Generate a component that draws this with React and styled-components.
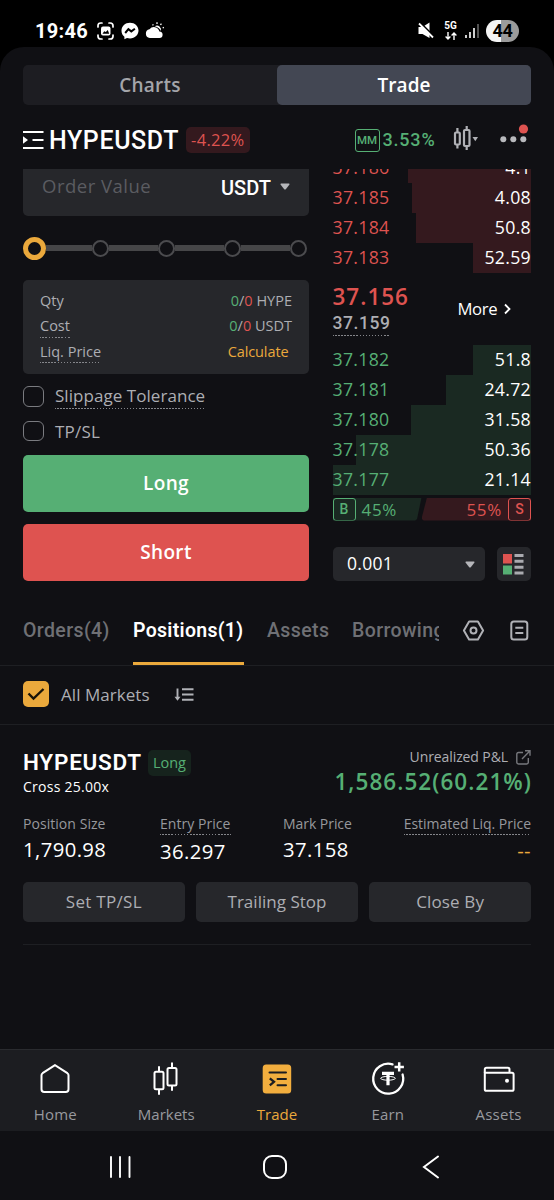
import React from "react"
import styled, { createGlobalStyle, css } from "styled-components"

const green = "#56af74"
const red = "#de5350"
const orange = "#eba93c"
const grey = "#adaeb3"
const panel = "#26272b"
const roboto = "Roboto, 'Liberation Sans', sans-serif"

const type = (size, weight, spacing) => css`
  font-size: ${size}px;
  font-weight: ${weight};
  letter-spacing: ${spacing}px;
`

const GlobalStyle = createGlobalStyle`
  * { box-sizing: border-box; }
  body {
    margin: 0;
    background: #000;
    color: #fff;
    font-family: "Open Sans", "Noto Sans", sans-serif;
    line-height: 1;
    white-space: nowrap;
  }
  button {
    border: 0;
    padding: 0;
    font-family: inherit;
    color: inherit;
  }
  svg { display: block; flex: none; overflow: visible; }
`

const Phone = styled.div`
  width: 554px;
  height: 1200px;
  overflow: hidden;
  display: flex;
  flex-direction: column;
`

/* ---------- status bar ---------- */

const StatusBar = styled.div`
  height: 47px;
  padding: 14px 35px 0 35px;
  display: flex;
  justify-content: space-between;
  font-family: ${roboto};
`

const StatusGroup = styled.div`
  height: 33px;
  display: flex;
  align-items: center;
`

const Clock = styled.span`
  ${type(20, 700, 0.3)}
  width: 61px;
`

const Network = styled.span`
  width: 15px;
  margin: 0 7px 0 9px;
  display: flex;
  flex-direction: column;
  align-items: center;
  gap: 1px;
  ${type(10, 700, 0)}
`

const Battery = styled.span`
  width: 33px;
  height: 22px;
  margin-left: 7px;
  border-radius: 11px;
  display: flex;
  align-items: center;
  justify-content: center;
  background: linear-gradient(90deg, #f4f4f4 44%, #9b9b9b 44%);
  color: #000;
  ${type(18, 700, -0.3)}
`

/* ---------- top of the app ---------- */

const Screen = styled.main`
  flex: 1;
  background: #101014;
  border-radius: 24px 24px 0 0;
  display: flex;
  flex-direction: column;
`

const Switcher = styled.div`
  height: 40px;
  margin: 18px 23px 0;
  display: grid;
  grid-template-columns: 1fr 1fr;
  border-radius: 5px;
  background: #1d1d22;
`

const SwitchTab = styled.button`
  border-radius: 5px;
  background: ${(p) => (p.$active ? "#434753" : "transparent")};
  color: ${(p) => (p.$active ? "#fff" : "#a4a5aa")};
  ${(p) => (p.$active ? type(19, 600, 0.1) : type(19, 600, 0.2))}
`

const PairBar = styled.header`
  height: 63.5px;
  padding: 7px 23px 0;
  display: flex;
  align-items: center;
`

const PairName = styled.h1`
  margin: 0 6px 0 5px;
  width: 130.5px;
  font-family: ${roboto};
  ${type(25, 500, 0.6)}
`

const Change = styled.span`
  width: 64.5px;
  height: 26px;
  line-height: 25px;
  text-align: center;
  border-radius: 5px;
  background: #34191e;
  color: ${red};
  ${type(16.5, 400, 0.3)}
`

const Margin = styled.span`
  margin-left: auto;
  display: flex;
  align-items: center;
  color: ${green};
  font-family: ${roboto};
  ${type(18, 500, 0.8)}
`

const Tag = styled.span`
  width: ${(p) => p.$width || 23}px;
  height: 23px;
  display: flex;
  align-items: center;
  justify-content: center;
  flex: none;
  border: 1.5px solid currentColor;
  border-radius: 3px;
  font-family: ${roboto};
  ${(p) => type(p.$size || 14, 500, 0)}
`

const MarginValue = styled.span`
  margin-left: 3px;
  width: 70.5px;
`

/* ---------- trading area ---------- */

const Workspace = styled.section`
  height: 413px;
  padding: 0 23px;
  display: grid;
  grid-template-columns: 286px 198.5px;
  justify-content: space-between;
  overflow: hidden;
`

const OrderForm = styled.div`
  display: flex;
  flex-direction: column;
`

const ValueField = styled.div`
  height: 47.5px;
  padding: 0 19px 12px 19px;
  display: flex;
  align-items: center;
  border-radius: 0 0 5px 5px;
  background: ${panel};
`

const Placeholder = styled.span`
  flex: 1;
  color: #5b5c61;
  ${type(18.5, 400, 0.5)}
`

const Unit = styled.span`
  margin-right: 9px;
  padding-top: 3px;
  font-family: ${roboto};
  ${type(20, 500, 0)}
`

const Slider = styled.div`
  height: 23px;
  margin: 20.5px 2.5px 20.5px 0;
  display: flex;
  align-items: center;
`

const Knob = styled.i`
  width: 23px;
  height: 23px;
  border: 5px solid ${orange};
  border-radius: 50%;
`

const Track = styled.i`
  flex: ${(p) => (p.$first ? "0 0 45.5px" : 1)};
  height: 5.5px;
  background: #464648;
`

const Stop = styled.i`
  width: 17px;
  height: 17px;
  border: 2.5px solid #4b4b4e;
  border-radius: 50%;
`

const Summary = styled.div`
  height: 93.5px;
  padding: 8px 17px 9px;
  display: grid;
  grid-template-rows: repeat(3, 1fr);
  border-radius: 5px;
  background: ${panel};
  color: ${grey};
  ${type(14.5, 400, 0)}
`

const SummaryRow = styled.div`
  display: flex;
  justify-content: space-between;
  align-items: center;
`

const Underlined = styled.span`
  padding-bottom: ${(p) => p.$gap || 3}px;
  margin-bottom: -${(p) => (p.$gap || 3) + 1}px;
  border-bottom: 1px solid transparent;
  border-image: repeating-linear-gradient(90deg, #85868b 0 1.5px, transparent 1.5px 3px) 1;
`

const Tone = styled.span`
  color: ${(p) => p.$color};
`

const Calculate = styled.span`
  margin-right: 3.5px;
  color: ${orange};
  letter-spacing: -0.1px;
`

const Option = styled.label`
  height: 21px;
  margin-top: ${(p) => p.$top}px;
  display: flex;
  align-items: center;
  color: ${grey};
  ${(p) => type(17, 400, p.$spacing)}
`

const OptionName = styled(Underlined)`
  position: relative;
  top: -1px;
`

const Box = styled.i`
  width: 20.5px;
  height: 20.5px;
  margin-right: 11.5px;
  border: 1.5px solid #7a7b80;
  border-radius: 6px;
`

const Submit = styled.button`
  height: 57.5px;
  margin-top: ${(p) => p.$top}px;
  border-radius: 5px;
  background: ${(p) => p.$color};
  ${type(19, 600, 0.35)}
`

const OrderBook = styled.div`
  margin-top: -15.5px;
  display: flex;
  flex-direction: column;
`

const BookRow = styled.div`
  height: 30px;
  padding-top: 0.5px;
  flex: none;
  display: flex;
  align-items: center;
  justify-content: space-between;
  background: linear-gradient(${(p) => p.$shade}, ${(p) => p.$shade}) right / ${(p) => p.$depth}px 100% no-repeat;
  ${type(17.7, 400, 0.3)}
`

const LastPrice = styled.div`
  height: 72px;
  display: grid;
  grid-template-columns: 125px 1fr;
  align-items: center;
`

const PriceStack = styled.div`
  display: flex;
  flex-direction: column;
  align-items: flex-start;
`

const Price = styled.strong`
  margin: 0 0 6px;
  color: ${red};
  ${type(22.5, 600, 1)}
`

const IndexPrice = styled(Underlined)`
  color: ${grey};
  font-family: ${roboto};
  ${type(17.5, 500, 0.55)}
`

const More = styled.span`
  display: flex;
  align-items: center;
  gap: 7px;
  ${type(16.7, 400, -0.4)}
`

const Ratio = styled.div`
  height: 23px;
  margin-top: 2.5px;
  flex: none;
  display: grid;
  grid-template-columns: 89px 109.5px;
  ${type(17, 400, 0.7)}
`

const Buyers = styled.div`
  display: flex;
  align-items: center;
  gap: 6px;
  color: ${green};
  background: #1a2922;
  clip-path: polygon(0 0, 100% 0, 95% 94%, 93% 100%, 0 100%);
`

const Sellers = styled.div`
  display: flex;
  align-items: center;
  justify-content: flex-end;
  gap: 6px;
  color: ${red};
  background: #34191e;
  clip-path: polygon(5% 0, 100% 0, 100% 100%, 2% 100%, 0 92%);
`

const BookTools = styled.div`
  height: 34px;
  margin-top: 26.5px;
  display: grid;
  grid-template-columns: 152.5px 34.5px;
  justify-content: space-between;
`

const Tool = styled.div`
  padding: ${(p) => p.$pad};
  display: flex;
  align-items: center;
  justify-content: space-between;
  border-radius: 5px;
  background: ${panel};
  ${type(17.5, 400, 0.3)}
`

/* ---------- tabs and filter ---------- */

const Tabs = styled.nav`
  height: 84.5px;
  padding: 0 23px;
  display: flex;
  border-bottom: 1px solid #1e1f23;
  font-family: ${roboto};
`

const TabStrip = styled.div`
  width: 416px;
  display: flex;
  gap: 23px;
  overflow: hidden;
`

const Tab = styled.span`
  flex: none;
  width: ${(p) => p.$width}px;
  padding-top: 39px;
  border-bottom: 3px solid ${(p) => (p.$active ? orange : "transparent")};
  color: ${(p) => (p.$active ? "#fff" : "#6f7075")};
  ${(p) => type(19.5, p.$active ? 600 : 500, p.$spacing)}
`

const TabIcons = styled.div`
  margin-left: 23.5px;
  padding-top: 39px;
  display: flex;
  align-items: flex-start;
  gap: 26px;
`

const Filter = styled.div`
  height: 58.5px;
  padding: 0 23px 1px;
  display: flex;
  align-items: center;
  border-bottom: 1px solid #1e1f23;
  color: ${grey};
  ${type(17, 400, 0.05)}
`

const Checked = styled.i`
  width: 26px;
  height: 26px;
  margin-right: 12px;
  display: flex;
  align-items: center;
  justify-content: center;
  border-radius: 5px;
  background: ${orange};
`

const FilterName = styled.span`
  width: 114px;
`

/* ---------- position card ---------- */

const Position = styled.article`
  height: 220.5px;
  margin: 0 23px;
  border-bottom: 1px solid #1e1f23;
`

const PositionTop = styled.div`
  height: 90px;
  padding-top: 24px;
  display: flex;
  justify-content: space-between;
`

const PositionPair = styled.div`
  height: 28px;
  display: flex;
  align-items: center;
  font-family: ${roboto};
  ${type(22.5, 600, 0.75)}
`

const Side = styled.span`
  width: 43px;
  height: 26px;
  line-height: 25px;
  margin-left: 6px;
  text-align: center;
  border-radius: 5px;
  background: #16231d;
  color: ${green};
  font-family: "Open Sans", "Noto Sans", sans-serif;
  ${type(14.5, 400, -0.1)}
`

const Leverage = styled.div`
  margin-top: 3px;
  ${type(14, 400, 0.25)}
`

const Pnl = styled.div`
  display: flex;
  flex-direction: column;
  align-items: flex-end;
`

const PnlLabel = styled.div`
  height: 17px;
  display: flex;
  align-items: center;
  gap: 8px;
  color: ${grey};
  ${type(14, 400, -0.1)}
`

const PnlValue = styled.strong`
  margin-top: 5px;
  margin-right: -1px;
  color: ${green};
  ${type(22.5, 600, 1.05)}
`

const Stats = styled.div`
  height: 67px;
  display: flex;
`

const Stat = styled.div`
  width: ${(p) => p.$width}px;
  display: flex;
  flex-direction: column;
  align-items: ${(p) => (p.$end ? "flex-end" : "flex-start")};
`

const StatLabel = styled.span`
  padding: 2px 0 3px;
  color: #97989d;
  ${(p) => type(14, 400, p.$spacing)}
  border-bottom: 1px solid transparent;
  ${(p) => p.$hint && css`
    border-image: repeating-linear-gradient(90deg, #85868b 0 1.5px, transparent 1.5px 3px) 1;
  `}
`

const StatValue = styled.span`
  margin-top: ${(p) => p.$top || 4.5}px;
  color: ${(p) => p.$color || "#fff"};
  ${type(20.3, 400, 0.4)}
`

const Actions = styled.div`
  display: grid;
  grid-template-columns: repeat(3, 1fr);
  gap: 11.5px;
`

const Action = styled.button`
  height: 40px;
  border-radius: 5px;
  background: ${panel};
  color: ${grey};
  ${(p) => type(17, 400, p.$spacing)}
`

/* ---------- bottom bars ---------- */

const BottomNav = styled.nav`
  height: 82px;
  margin-top: auto;
  display: grid;
  grid-template-columns: repeat(5, 1fr);
  border-top: 1px solid #2a2b2f;
  background: #1c1d21;
`

const NavItem = styled.a`
  padding-top: 11px;
  display: flex;
  flex-direction: column;
  align-items: center;
  gap: 9.5px;
  color: ${(p) => (p.$active ? orange : "#98999e")};
  ${(p) => type(15, 400, p.$spacing)}
`

const SystemNav = styled.div`
  height: 69px;
  padding: 3px 114px 0 109px;
  display: flex;
  align-items: center;
  justify-content: space-between;
`

const Caret = ({ size = 10 }) => (
  <svg width={size} height={size * 0.7} viewBox="0 0 10 7" fill="#b5b6ba">
    <path d="M1 0.5h8q1 .3.3 1.3L5.8 6.2q-.8.7-1.6 0L.7 1.8Q0 .8 1 .5z" />
  </svg>
)

const asks = [
  ["37.186", "4.1", 123],
  ["37.185", "4.08", 119],
  ["37.184", "50.8", 115],
  ["37.183", "52.59", 58],
]

const bids = [
  ["37.182", "51.8", 58],
  ["37.181", "24.72", 85],
  ["37.180", "31.58", 120],
  ["37.178", "50.36", 175],
  ["37.177", "21.14", 198.5],
]

const StatusIcons = () => (
  <StatusBar>
    <StatusGroup>
      <Clock>19:46</Clock>
      <svg width="68" height="18" viewBox="0 0 68 18" fill="#fff">
        <g fill="none" stroke="#fff" strokeWidth="1.7" strokeLinecap="round">
          <path d="M2 5V3.8Q2 1 4.8 1H6M13 1h1.200Q17 1 17 3.800V5M17 13v1.200Q17 17 14.200 17H13M6 17H4.800Q2 17 2 14.200V13" />
        </g>
        <rect x="5" y="4.500" width="9.500" height="9" rx="2" />
        <path d="M6.500 11.700l1.700-2.500 1.600.8 2-2.100 1.400 3.800z" fill="#000" />
        <path d="M34 .7c-4.900 0-8.500 3.500-8.500 8 0 2.500 1.100 4.600 2.900 6v2.600l2.600-1.200c1 .3 1.900.4 3 .4 4.900 0 8.500-3.500 8.500-7.900s-3.600-7.900-8.500-7.900z" />
        <path d="M29.200 11l3.200-3.800 2.900 2.200 3.600-2.600" fill="none" stroke="#000" strokeWidth="2" />
        <path d="M53.800 16a4.400 4.400 0 0 1-.3-8.700 5.600 5.600 0 0 1 9.900 2.100 3.300 3.300 0 0 1-.2 6.600z" />
        <path d="M58.800 4.300a4 4 0 0 1 6 4.600q-1.500-3.200-6-4.600z" />
        <path d="M57.300 3.300l-.7-1M61 1.900V.3M64.500 3l.9-1.300M66.700 6l1.200-.6" stroke="#fff" strokeWidth="1.300" />
      </svg>
    </StatusGroup>
    <StatusGroup>
      <svg width="16" height="17" viewBox="0 0 16 17" fill="#fff">
        <path d="M.5 5h4L11.500.5v15.500L4.500 12h-4z" />
        <path d="M2.500 .8l14 14" stroke="#000" strokeWidth="1.800" />
        <path d="M1 1.500L15 15.500" stroke="#fff" strokeWidth="1.800" />
      </svg>
      <Network>
        5G
        <svg width="12" height="8" viewBox="0 0 12 8" fill="none" stroke="#fff" strokeWidth="1.400">
          <path d="M3 0v7M.6 4.600L3 7l2.400-2.400M9 8V1M6.600 3.400L9 1l2.400 2.400" />
        </svg>
      </Network>
      <svg width="14" height="16" viewBox="0 0 14 16">
        <path d="M1 12v3M5 9v6M9 5v10" stroke="#fff" strokeWidth="1.600" />
        <path d="M13 1v14" stroke="#666" strokeWidth="1.600" />
      </svg>
      <Battery>44</Battery>
    </StatusGroup>
  </StatusBar>
)

const PairHeader = () => (
  <PairBar>
    <svg width="21" height="19" viewBox="0 0 21 19" fill="none" stroke="#fff" strokeWidth="2.200">
      <path d="M0 1h20.500M9.500 9h11M0 17h20.500" />
      <path d="M0 5.300l5 3.700-5 3.700z" fill="#fff" stroke="none" />
    </svg>
    <PairName>HYPEUSDT</PairName>
    <Change>-4.22%</Change>
    <Margin>
      <Tag $width={25} $size={11.5}>MM</Tag>
      <MarginValue>3.53%</MarginValue>
    </Margin>
    <svg width="78" height="28" viewBox="0 0 78 28" fill="none" stroke="#b0b1b6" strokeWidth="2.200">
      <rect x="2" y="6.500" width="4.800" height="12" rx="1" />
      <path d="M4.400 2v4.500M4.400 18.500v4" />
      <rect x="11" y="4" width="5.500" height="16" rx="1" />
      <path d="M13.700 0v4M13.700 20v4" />
      <path d="M19.500 11h5.500l-2.700 4.300z" fill="#b0b1b6" stroke="none" />
      <g fill="#b8b9bd" stroke="none">
        <circle cx="50.300" cy="13.300" r="3" />
        <circle cx="60.300" cy="13.300" r="3" />
        <circle cx="70.300" cy="13.300" r="3" />
      </g>
      <circle cx="70.500" cy="3" r="4.600" fill={red} stroke="none" />
    </svg>
  </PairBar>
)

const Form = () => (
  <OrderForm>
    <ValueField>
      <Placeholder>Order Value</Placeholder>
      <Unit>USDT</Unit>
      <Caret />
    </ValueField>
    <Slider>
      <Knob />
      {[1, 2, 3, 4].map((n) => (
        <React.Fragment key={n}>
          <Track $first={n === 1} />
          <Stop />
        </React.Fragment>
      ))}
    </Slider>
    <Summary>
      <SummaryRow>
        <span>Qty</span>
        <span><Tone $color={green}>0</Tone>/<Tone $color={red}>0</Tone> HYPE</span>
      </SummaryRow>
      <SummaryRow>
        <Underlined>Cost</Underlined>
        <span><Tone $color={green}>0</Tone>/<Tone $color={red}>0</Tone> USDT</span>
      </SummaryRow>
      <SummaryRow>
        <Underlined>Liq. Price</Underlined>
        <Calculate>Calculate</Calculate>
      </SummaryRow>
    </Summary>
    <Option $top={12.5} $spacing={0.05}><Box /><OptionName $gap={3.5}>Slippage Tolerance</OptionName></Option>
    <Option $top={13.5} $spacing={0.2}><Box />TP/SL</Option>
    <Submit $top={13} $color={green}>Long</Submit>
    <Submit $top={11.5} $color={red}>Short</Submit>
  </OrderForm>
)

const Book = () => (
  <OrderBook>
    {asks.map(([price, size, depth]) => (
      <BookRow key={price} $depth={depth} $shade="#34191e">
        <Tone $color={red}>{price}</Tone>
        <span>{size}</span>
      </BookRow>
    ))}
    <LastPrice>
      <PriceStack>
        <Price>37.156</Price>
        <IndexPrice>37.159</IndexPrice>
      </PriceStack>
      <More>
        More
        <svg width="7" height="10" viewBox="0 0 7 10" fill="none" stroke="#fff" strokeWidth="1.800">
          <path d="M1 .5L5.500 5 1 9.500" />
        </svg>
      </More>
    </LastPrice>
    {bids.map(([price, size, depth]) => (
      <BookRow key={price} $depth={depth} $shade="#1a2922">
        <Tone $color={green}>{price}</Tone>
        <span>{size}</span>
      </BookRow>
    ))}
    <Ratio>
      <Buyers><Tag>B</Tag>45%</Buyers>
      <Sellers>55%<Tag>S</Tag></Sellers>
    </Ratio>
    <BookTools>
      <Tool $pad="0 10.5px 0 14.500px">0.001<Caret size={10} /></Tool>
      <Tool $pad="0 6.5px">
        <svg width="21" height="21" viewBox="0 0 21 21">
          <path d="M0 0h9v9.500H0z" fill={red} />
          <path d="M0 11.500h9v9H0z" fill={green} />
          <path d="M11.500 1.500h9M11.500 7.200h9M11.500 13.200h9M11.500 19h9" stroke="#aaabb0" strokeWidth="3" />
        </svg>
      </Tool>
    </BookTools>
  </OrderBook>
)

const App = () => (
  <>
    <GlobalStyle />
    <Phone>
      <StatusIcons />
      <Screen>
        <Switcher>
          <SwitchTab>Charts</SwitchTab>
          <SwitchTab $active>Trade</SwitchTab>
        </Switcher>
        <PairHeader />
        <Workspace>
          <Form />
          <Book />
        </Workspace>

        <Tabs>
          <TabStrip>
            <Tab $width={87} $spacing={0.4}>Orders(4)</Tab>
            <Tab $width={111} $spacing={0.3} $active>Positions(1)</Tab>
            <Tab $width={62} $spacing={0.4}>Assets</Tab>
            <Tab $width={100} $spacing={0.4}>Borrowing</Tab>
          </TabStrip>
          <TabIcons>
            <svg width="22" height="20" viewBox="0 0 22 20" fill="none" stroke="#b0b1b6" strokeWidth="2">
              <path d="M6.100 .5h8.800l5.200 9-5.200 9H6.100L.900 9.500z" strokeLinejoin="round" />
              <circle cx="10.500" cy="9.500" r="3" />
            </svg>
            <svg width="18" height="20" viewBox="0 0 18 20" fill="none" stroke="#b0b1b6" strokeWidth="2">
              <rect x=".300" y=".500" width="16" height="18" rx="2.500" />
              <path d="M4.300 6.800h8M4.300 12h8" />
            </svg>
          </TabIcons>
        </Tabs>

        <Filter>
          <Checked>
            <svg width="16" height="12" viewBox="0 0 16 12" fill="none" stroke="#1a1408" strokeWidth="2.400">
              <path d="M.5 5.500l5 5L15.500 1" />
            </svg>
          </Checked>
          <FilterName>All Markets</FilterName>
          <svg width="19" height="13" viewBox="0 0 19 13" fill="none" stroke="#b0b1b6" strokeWidth="1.900">
            <path d="M2.500 .5v10.500M7 1.200H18.500M7 6.500H18.500M7 11.800H18.500" />
            <path d="M-.5 8.800h6l-3 4z" fill="#b0b1b6" stroke="none" />
          </svg>
        </Filter>

        <Position>
          <PositionTop>
            <div>
              <PositionPair>HYPEUSDT<Side>Long</Side></PositionPair>
              <Leverage>Cross 25.00x</Leverage>
            </div>
            <Pnl>
              <PnlLabel>
                Unrealized P&amp;L
                <svg width="15" height="15" viewBox="0 0 15 15" fill="none" stroke="#77787d" strokeWidth="1.400">
                  <path d="M7 2.500H2.500Q.8 2.500.8 4.200v8.100q0 1.700 1.700 1.700h8.100q1.700 0 1.700-1.700V8M9 .8h5v5M14 .8L6 9" />
                </svg>
              </PnlLabel>
              <PnlValue>1,586.52(60.21%)</PnlValue>
            </Pnl>
          </PositionTop>
          <Stats>
            <Stat $width={137}>
              <StatLabel $spacing={0.05}>Position Size</StatLabel>
              <StatValue>1,790.98</StatValue>
            </Stat>
            <Stat $width={123}>
              <StatLabel $spacing={0.05} $hint>Entry Price</StatLabel>
              <StatValue $top={6}>36.297</StatValue>
            </Stat>
            <Stat $width={121}>
              <StatLabel $spacing={-0.05}>Mark Price</StatLabel>
              <StatValue>37.158</StatValue>
            </Stat>
            <Stat $width={127} $end>
              <StatLabel $spacing={-0.02} $hint>Estimated Liq. Price</StatLabel>
              <StatValue $top={5.5} $color={orange}>--</StatValue>
            </Stat>
          </Stats>
          <Actions>
            <Action $spacing={0.3}>Set TP/SL</Action>
            <Action $spacing={0.02}>Trailing Stop</Action>
            <Action $spacing={0.15}>Close By</Action>
          </Actions>
        </Position>

        <BottomNav>
          <NavItem $spacing={0.2}>
            <svg width="36" height="36" viewBox="0 0 36 36" fill="none" stroke="#fff" strokeWidth="2">
              <path d="M18 4.200L5.600 12.200Q4.500 13 4.500 14.200V28.200Q4.500 31 7.300 31h21.400q2.800 0 2.800-2.800V14.200q0-1.200-1.100-2z" />
            </svg>
            Home
          </NavItem>
          <NavItem $spacing={0}>
            <svg width="36" height="36" viewBox="0 0 36 36" fill="none" stroke="#fff" strokeWidth="2">
              <rect x="6.500" y="10.700" width="9" height="17.500" rx="1.500" />
              <rect x="19.500" y="7" width="9" height="17.500" rx="1.500" />
              <path d="M11 5.300v5.400M11 28.200v5.500M24 1.500V7M24 24.500v5.200" />
            </svg>
            Markets
          </NavItem>
          <NavItem $spacing={0.05} $active>
            <svg width="36" height="36" viewBox="0 0 36 36" fill="none" stroke="#1c1d21" strokeWidth="2">
              <rect x="3.700" y="3.500" width="28.500" height="29" rx="3.500" fill="#f2ae3e" stroke="none" />
              <path d="M10.500 11.500h16.500M18.500 18h8.500M18.500 24.300h8.500" strokeLinecap="round" />
              <path d="M10.800 17.300l4.200 3.500-4.200 3.500" strokeWidth="2.300" />
            </svg>
            Trade
          </NavItem>
          <NavItem $spacing={0.1}>
            <svg width="36" height="36" viewBox="0 0 36 36" fill="none" stroke="#fff" strokeWidth="2.300">
              <path d="M22.500 3.300A15 15 0 1 0 32.600 13.500" strokeLinecap="round" />
              <path d="M29.200 1.200v9.400M24.500 5.900h9.400" strokeWidth="2.500" />
              <path d="M12 12.300h12M18 12.300v12" strokeWidth="3.200" />
              <ellipse cx="18" cy="17.300" rx="7.300" ry="1.900" strokeWidth="1" />
            </svg>
            Earn
          </NavItem>
          <NavItem $spacing={0.25}>
            <svg width="36" height="36" viewBox="0 0 36 36" fill="none" stroke="#fff" strokeWidth="2">
              <path d="M28.500 11.800V8.500q0-1.700-1.700-1.700H5.500q-1.700 0-1.700 1.700V11.800" />
              <path d="M3.800 11.800H31q1.600 0 1.600 1.600v14.800q0 1.600-1.600 1.600H5.400q-1.600 0-1.600-1.600z" />
              <circle cx="26" cy="19.700" r="2" fill="#fff" stroke="none" />
            </svg>
            Assets
          </NavItem>
        </BottomNav>
        <SystemNav>
          <svg width="22" height="22" viewBox="0 0 22 22" stroke="#fff" strokeWidth="1.900" strokeLinecap="round">
            <path d="M2 1v20M11 1v20M20.500 1v20" />
          </svg>
          <svg width="24" height="24" viewBox="0 0 24 24" fill="none" stroke="#fff" strokeWidth="2">
            <rect x="1" y="1" width="22" height="22" rx="8" />
          </svg>
          <svg width="21" height="22" viewBox="-3 0 21 22" fill="none" stroke="#fff" strokeWidth="2" strokeLinecap="round">
            <path d="M16 .5L2 11l14 10.500" />
          </svg>
        </SystemNav>
      </Screen>
    </Phone>
  </>
)

export default App
